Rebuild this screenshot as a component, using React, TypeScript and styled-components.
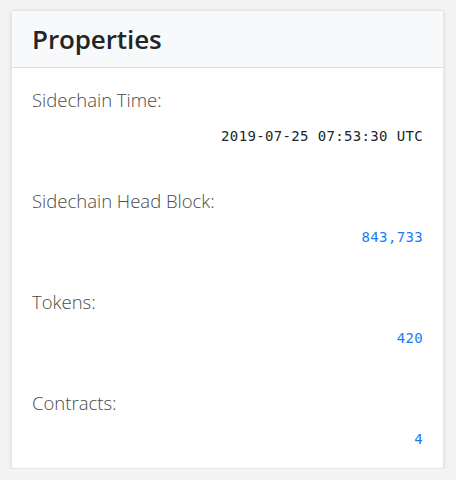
import React from "react";
import styled, { createGlobalStyle } from "styled-components";

const Global = createGlobalStyle`
  html, body { margin: 0; padding: 0; background: #f4f4f4; }
  body { font-family: "Open Sans", "Liberation Sans", sans-serif; }
`;

const Page = styled.div`
  padding: 10px 12px 0 11px;
`;

const Card = styled.section`
  width: 433px;
  background: #fff;
  border: 1px solid #e3e5e8;
  border-radius: 3px;
  box-shadow: 0 1px 4px rgba(0, 0, 0, 0.12);
  box-sizing: border-box;
`;

const Header = styled.header`
  height: 57px;
  box-sizing: border-box;
  background: #f8f9fa;
  border-bottom: 1px solid #dcdfe3;
  padding: 0 20px;
  display: flex;
  align-items: center;
`;

const Title = styled.h2`
  margin: 0;
  font-family: "Open Sans", sans-serif;
  font-weight: 600;
  font-size: 26px;
  color: #212529;
  letter-spacing: -0.1px;
`;

const Body = styled.dl`
  margin: 0;
  padding: 17px 20px 18px 20px;
  display: flex;
  flex-direction: column;
`;

const Item = styled.div`
  display: flex;
  flex-direction: column;
  & + & { margin-top: 39px; }
`;

const Label = styled.dt`
  font-family: "Open Sans", sans-serif;
  font-weight: 300;
  font-size: 18.5px;
  line-height: 30px;
  color: #4a4a4a;
`;

const Value = styled.dd<{ $link?: boolean }>`
  margin: 10px 0 0 0;
  text-align: right;
  font-family: "DejaVu Sans Mono", "Liberation Mono", monospace;
  font-size: 14px;
  letter-spacing: 0.35px;
  line-height: 22px;
  color: ${(p) => (p.$link ? "#1a7cf5" : "#212529")};
`;

const rows = [
  { label: "Sidechain Time:", value: "2019-07-25 07:53:30 UTC", link: false },
  { label: "Sidechain Head Block:", value: "843,733", link: true },
  { label: "Tokens:", value: "420", link: true },
  { label: "Contracts:", value: "4", link: true },
];

export default function App() {
  return (
    <Page>
      <Global />
      <Card>
        <Header>
          <Title>Properties</Title>
        </Header>
        <Body>
          {rows.map((r) => (
            <Item key={r.label}>
              <Label>{r.label}</Label>
              <Value $link={r.link}>{r.value}</Value>
            </Item>
          ))}
        </Body>
      </Card>
    </Page>
  );
}
